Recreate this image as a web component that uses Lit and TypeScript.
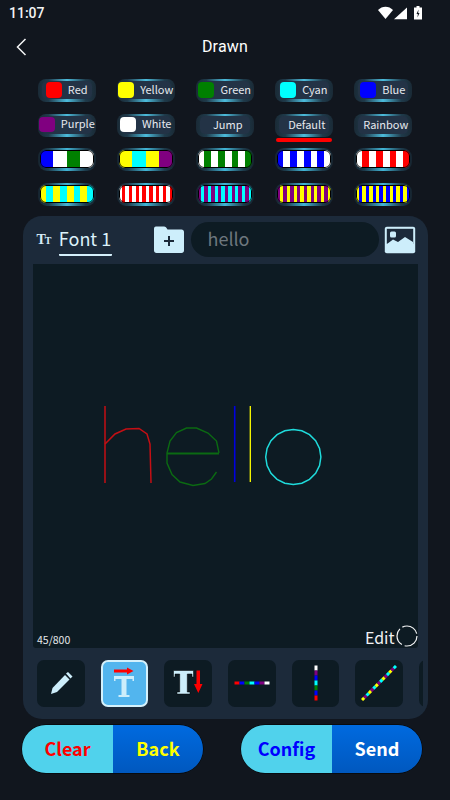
import { LitElement, html, css, svg } from 'lit';
import { customElement } from 'lit/decorators.js';

const RED = '#ff0000';
const YEL = '#ffff00';
const GRN = '#008000';
const CYN = '#00ffff';
const BLU = '#0000ff';
const PUR = '#800080';
const WHT = '#ffffff';

const COLOR_CHIPS = [
  { label: 'Red', color: RED },
  { label: 'Yellow', color: YEL },
  { label: 'Green', color: GRN },
  { label: 'Cyan', color: CYN },
  { label: 'Blue', color: BLU },
  { label: 'Purple', color: PUR },
  { label: 'White', color: WHT },
  { label: 'Jump' },
  { label: 'Default', selected: true },
  { label: 'Rainbow' },
];

const repeat = (colors: string[], times: number) => Array.from({ length: times }, () => colors).flat();

const STRIPES = [
  [BLU, WHT, GRN, WHT],
  [YEL, CYN, YEL, PUR],
  repeat([WHT, GRN], 4),
  repeat([BLU, WHT], 4),
  repeat([WHT, RED], 4),
  repeat([YEL, CYN], 4),
  repeat([WHT, RED], 8),
  repeat([PUR, CYN], 8),
  repeat([PUR, YEL], 8),
  repeat([YEL, BLU], 8),
];

@customElement('app-root')
export class AppRoot extends LitElement {
  static styles = css`
    :host {
      display: block;
      width: 450px;
      height: 800px;
      background: #11161e;
      color: #fff;
      font-family: 'Noto Sans CJK SC', 'Noto Sans', sans-serif;
      overflow: hidden;
    }
    .status {
      height: 24px;
      padding: 1px 27px 0 9px;
      display: flex;
      align-items: center;
      justify-content: space-between;
      font: 500 14px Roboto, sans-serif;
      color: #f2f3f4;
    }
    .status-icons {
      display: flex;
      align-items: center;
    }
    .header {
      height: 44px;
      padding-bottom: 2px;
      box-sizing: border-box;
      display: flex;
      align-items: center;
      justify-content: center;
      position: relative;
      font: 400 16px Roboto, sans-serif;
      letter-spacing: 0.2px;
    }
    .back {
      position: absolute;
      left: 15px;
      top: 13px;
    }
    .palette {
      margin: 10px 0 0 37.5px;
      display: grid;
      grid-template-columns: repeat(5, 58.5px);
      column-gap: 20.5px;
      grid-auto-rows: 23px;
      row-gap: 11.6px;
    }
    .chip {
      position: relative;
      border-radius: 8px;
      background: linear-gradient(90deg, #1a2a36 0%, #1f3a4a 18%, #4cbcdc 50%, #1f3a4a 82%, #1a2a36 100%);
      padding: 2px 4px 3px;
      box-sizing: border-box;
    }
    .chip-inner {
      height: 100%;
      border-radius: 5px;
      background: #233346;
      display: flex;
      align-items: center;
      justify-content: center;
      gap: 6px;
      font-size: 11px;
      line-height: 14px;
      padding-bottom: 1px;
      box-sizing: border-box;
      color: #e6e9ee;
      white-space: nowrap;
    }
    .chip-inner .label {
      position: relative;
      top: -1px;
    }
    .chip-inner .label.plain {
      left: 3px;
      top: 0;
    }
    .swatch {
      width: 16px;
      height: 15.5px;
      border-radius: 4px;
      flex: none;
      margin-top: 1px;
    }
    .underline {
      position: absolute;
      left: 1px;
      right: 1px;
      bottom: -5px;
      height: 3.5px;
      border-radius: 2px;
      background: #ff0000;
    }
    .stripe-chip {
      border-radius: 9px;
      padding: 2px 2px 3px;
      background: linear-gradient(90deg, #16242f 0%, #1d3a4a 18%, #41b5d6 50%, #1d3a4a 82%, #16242f 100%);
      box-sizing: border-box;
    }
    .stripes {
      display: flex;
      height: 100%;
      border-radius: 6px;
      overflow: hidden;
      position: relative;
    }
    .stripes::after {
      content: '';
      position: absolute;
      inset: 0;
      border: 1px solid #000;
      border-radius: 6px;
    }
    .stripes span {
      flex: 1;
    }
    .panel {
      margin: 10.2px 22px 0 23px;
      height: 503px;
      box-sizing: border-box;
      background: #1c2a3a;
      border-radius: 19px;
      padding: 0 10px;
    }
    .font-row {
      height: 48px;
      display: flex;
      align-items: center;
      position: relative;
    }
    .tt {
      font: 700 14px 'Liberation Serif', serif;
      color: #d5ecf7;
      margin: 0 9px 0 3.5px;
      width: 13px;
      display: flex;
      align-items: baseline;
      letter-spacing: -1px;
      padding-top: 1px;
    }
    .tt small {
      font-size: 10px;
    }
    .font-tab {
      width: 53px;
      height: 31px;
      box-sizing: border-box;
      border-bottom: 2px solid #d5f0fb;
      border-radius: 0 0 1px 1px;
      font-size: 18px;
      line-height: 26px;
      color: #dcf2fb;
      text-align: center;
      white-space: nowrap;
      margin-top: 1px;
    }
    .add {
      margin-left: 41px;
      display: block;
    }
    .hello-input {
      margin-left: 6px;
      width: 188px;
      height: 35px;
      border-radius: 18px;
      background: #0d1b23;
      color: #6d777e;
      font-size: 18px;
      line-height: 33px;
      padding-left: 17px;
      box-sizing: border-box;
    }
    .image {
      margin-left: 5px;
      display: block;
    }
    .canvas {
      position: relative;
      height: 384px;
      background: #0d1b23;
      border-radius: 0 0 3px 3px;
    }
    .canvas svg.drawing {
      position: absolute;
      left: 0;
      top: 1px;
    }
    .count {
      position: absolute;
      left: 4px;
      bottom: 1px;
      font-size: 10.5px;
      line-height: 14px;
      color: #e4e7ea;
    }
    .edit {
      position: absolute;
      right: 0.5px;
      bottom: 1px;
      display: flex;
      align-items: center;
      gap: 1px;
      font-size: 16px;
      line-height: 22px;
      color: #f0f2f4;
    }
    .edit span {
      position: relative;
      top: 1px;
    }
    .tools {
      margin: 11.7px -5px 0 4px;
      display: flex;
      gap: 16.2px;
      overflow: hidden;
    }
    .tool {
      flex: none;
      width: 47.5px;
      height: 47.5px;
      box-sizing: border-box;
      border-radius: 7px;
      background: #0d1b23;
      display: flex;
      align-items: center;
      justify-content: center;
    }
    .tool.active {
      background: #52b5ee;
      border: 2px solid #d4f1fc;
    }
    .actions {
      margin: 6px 28px 0 22px;
      display: flex;
      justify-content: space-between;
    }
    .pair {
      width: 181px;
      height: 48px;
      display: flex;
      border-radius: 24px;
      overflow: hidden;
      box-shadow: 0 0 0 0.5px #000;
      font-size: 18px;
      font-weight: 700;
    }
    .pair span {
      display: flex;
      align-items: center;
      justify-content: center;
      padding-bottom: 1px;
      box-sizing: border-box;
    }
    .pair .left {
      width: 91px;
      background: #50d2ec;
    }
    .pair .right {
      flex: 1;
      background: linear-gradient(180deg, #006adf, #0058bf);
    }
  `;

  private renderChip(chip: { label: string; color?: string; selected?: boolean }) {
    return html`<div class="chip">
      <div class="chip-inner">
        ${chip.color ? html`<span class="swatch" style="background:${chip.color}"></span>` : ''}
        <span class="label ${chip.color ? '' : 'plain'}">${chip.label}</span>
      </div>
      ${chip.selected ? html`<div class="underline"></div>` : ''}
    </div>`;
  }

  private renderStripes(colors: string[]) {
    return html`<div class="stripe-chip">
      <div class="stripes">${colors.map((c) => html`<span style="background:${c}"></span>`)}</div>
    </div>`;
  }

  // line made of coloured dashes, used by the three direction tools
  private dashLine(x1: number, y1: number, x2: number, y2: number, colors: string[], width: number) {
    const n = colors.length;
    return colors.map((c, i) => svg`<line
      x1=${x1 + ((x2 - x1) * i) / n} y1=${y1 + ((y2 - y1) * i) / n}
      x2=${x1 + ((x2 - x1) * (i + 1)) / n} y2=${y1 + ((y2 - y1) * (i + 1)) / n}
      stroke=${c} stroke-width=${width}></line>`);
  }

  private renderDrawing() {
    const o = Array.from({ length: 20 }, (_, i) => {
      const a = (i / 20) * Math.PI * 2;
      return `${260.3 + 27.6 * Math.cos(a)},${192 + 27.6 * Math.sin(a)}`;
    }).join(' ');
    return html`<svg class="drawing" width="384" height="383" viewBox="0 0 384 383" fill="none">
      <path d="M72 141V218" stroke="#c40f14" stroke-width="1.5" />
      <path d="M72 179L82 169L93 164L106 163.5L114 169L117 179L118 218" stroke="#c40f14" stroke-width="1.5" />
      <path d="M134 188.5H186" stroke="#0b6a12" stroke-width="1.8" />
      <path
        d="M186 188L183.5 176L175 168L163.5 163L153.5 163L143.5 167.5L137 176L134 188L134 198L139 209.5L147 217L160 220.5L172 218.5L178.5 214L183.5 207"
        stroke="#0b6a12"
        stroke-width="1.4"
      />
      <path d="M201.7 141V217" stroke="#0000e0" stroke-width="1.6" />
      <path d="M217.3 141V217" stroke="#ffff00" stroke-width="1.3" />
      <polygon points=${o} stroke="#1fdcdc" stroke-width="1.5" />
    </svg>`;
  }

  render() {
    return html`
      <div class="status">
        <span>11:07</span>
        <span class="status-icons">
          <svg width="46" height="16" viewBox="0 0 46 16">
            <path d="M1 5C5 0.500 12 0.500 16 5L8.500 14Z" fill="#fff" />
            <path d="M17 14.300L30 2.500V14.300Z" fill="#fff" />
            <path d="M37 2.500H39.500V1H42.500V2.500H45V14.500H37Z" fill="#fff" />
            <path d="M41.500 4.500L39.500 9H40.800L40.500 12.500L42.500 8H41.200Z" fill="#11161e" />
          </svg>
        </span>
      </div>
      <div class="header">
        <svg class="back" width="14" height="18" viewBox="0 0 14 18" fill="none">
          <path d="M10.5 1L2.5 9L10.5 17" stroke="#f4f5f6" stroke-width="1.5" />
        </svg>
        Drawn
      </div>

      <div class="palette">
        ${COLOR_CHIPS.map((c) => this.renderChip(c))}
        ${STRIPES.map((s) => this.renderStripes(s))}
      </div>

      <div class="panel">
        <div class="font-row">
          <span class="tt">T<small>T</small></span>
          <span class="font-tab">Font 1</span>
          <svg class="add" width="32" height="28" viewBox="0 0 32 28">
            <path
              d="M3 0.5H11C12.5 0.5 13.5 1.5 14.5 3.5H28.5C30 3.5 31 4.5 31 6V24.5C31 26 30 27 28.5 27H3.5C2 27 1 26 1 24.5V3C1 1.5 1.5 0.5 3 0.5Z"
              fill="#cdeefb"
            />
            <path d="M16 10V20M11 15H21" stroke="#1c2a3a" stroke-width="2" />
          </svg>
          <span class="hello-input">hello</span>
          <svg class="image" width="32" height="28" viewBox="0 0 32 28" fill="none">
            <rect x="0.8" y="0.8" width="30.4" height="26.4" rx="2" fill="#cdeefb" />
            <rect x="2.8" y="2.8" width="26.4" height="15" fill="#1c2a3a" />
            <path d="M3 18L9 13.5L14 16L21 11L29 16V25H3Z" fill="#cdeefb" />
            <rect x="6" y="5.5" width="6" height="6" rx="1.5" fill="#cdeefb" />
          </svg>
        </div>

        <div class="canvas">
          ${this.renderDrawing()}
          <span class="count">45/800</span>
          <span class="edit">
            <span>Edit</span>
            <svg width="22" height="22" viewBox="0 0 22 22" fill="none">
              <circle cx="11" cy="11" r="10" stroke="#f4f5f6" stroke-width="1.2" stroke-dasharray="18 3" />
            </svg>
          </span>
        </div>

        <div class="tools">
          <div class="tool">
            <svg width="26" height="26" viewBox="0 0 26 26">
              <path d="M3 24L4.5 18L17 5L21.5 9.5L9 22Z" fill="#cdeefb" />
              <path d="M18 3.5L20 2L24.5 6.5L22.5 8.5Z" fill="#cdeefb" />
            </svg>
          </div>
          <div class="tool active">
            <svg width="30" height="34" viewBox="0 0 30 34">
              <path d="M5 3.5H18V1.5L24.5 5L18 8.5V6.5H5Z" fill="#ff0000" />
              <path d="M5 10H25V15H23.5V13H17.500V29H20.500V31H9.500V29H12.500V13H6.500V15H5Z" fill="#cdeefb" />
            </svg>
          </div>
          <div class="tool">
            <svg width="30" height="30" viewBox="0 0 30 30">
              <path d="M0.5 2.5H20.500V9H19V6H14.300V24H17V26H4V24H6.700V6H2V9H0.500Z" fill="#cdeefb" stroke="#000" stroke-width="0.5" />
              <path d="M23.5 2.5H27V16H29.500L25.300 25L21 16H23.500Z" fill="#ff0000" />
            </svg>
          </div>
          <div class="tool">
            <svg width="36" height="8" viewBox="0 0 36 8">
              ${this.dashLine(0.5, 4, 35.5, 4, [RED, BLU, GRN, CYN, BLU, PUR, WHT], 3)}
            </svg>
          </div>
          <div class="tool">
            <svg width="8" height="36" viewBox="0 0 8 36">
              ${this.dashLine(4, 0.5, 4, 35.5, [WHT, PUR, BLU, CYN, GRN, BLU, RED], 3)}
            </svg>
          </div>
          <div class="tool">
            <svg width="36" height="36" viewBox="0 0 36 36">
              ${this.dashLine(1, 35, 35, 1, repeat([YEL, PUR, CYN], 5), 3)}
            </svg>
          </div>
          <div class="tool"></div>
        </div>
      </div>

      <div class="actions">
        <div class="pair">
          <span class="left" style="color:${RED}">Clear</span>
          <span class="right" style="color:${YEL}">Back</span>
        </div>
        <div class="pair">
          <span class="left" style="color:${BLU}">Config</span>
          <span class="right" style="color:${WHT}">Send</span>
        </div>
      </div>
    `;
  }
}
